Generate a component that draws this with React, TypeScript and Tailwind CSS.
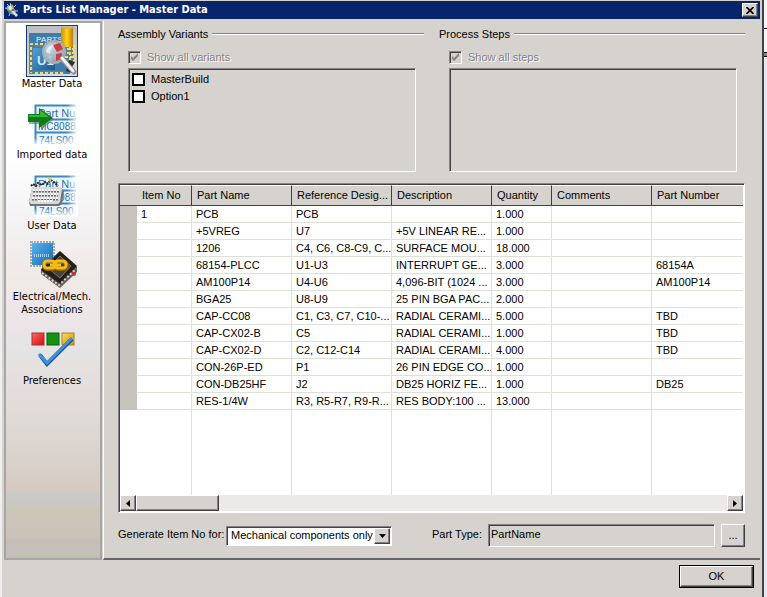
import React, { ReactNode, useState } from "react";

interface Part {
  itemNo?: string;
  name: string;
  ref: string;
  description?: string;
  quantity: string;
  comments?: string;
  partNumber?: string;
}

const parts: Part[] = [
  { itemNo: "1", name: "PCB", ref: "PCB", quantity: "1.000" },
  { name: "+5VREG", ref: "U7", description: "+5V LINEAR RE...", quantity: "1.000" },
  { name: "1206", ref: "C4, C6, C8-C9, C...", description: "SURFACE MOU...", quantity: "18.000" },
  { name: "68154-PLCC", ref: "U1-U3", description: "INTERRUPT GE...", quantity: "3.000", partNumber: "68154A" },
  { name: "AM100P14", ref: "U4-U6", description: "4,096-BIT (1024 ...", quantity: "3.000", partNumber: "AM100P14" },
  { name: "BGA25", ref: "U8-U9", description: "25 PIN BGA PAC...", quantity: "2.000" },
  { name: "CAP-CC08", ref: "C1, C3, C7, C10-...", description: "RADIAL CERAMI...", quantity: "5.000", partNumber: "TBD" },
  { name: "CAP-CX02-B", ref: "C5", description: "RADIAL CERAMI...", quantity: "1.000", partNumber: "TBD" },
  { name: "CAP-CX02-D", ref: "C2, C12-C14", description: "RADIAL CERAMI...", quantity: "4.000", partNumber: "TBD" },
  { name: "CON-26P-ED", ref: "P1", description: "26 PIN EDGE CO...", quantity: "1.000" },
  { name: "CON-DB25HF", ref: "J2", description: "DB25 HORIZ FE...", quantity: "1.000", partNumber: "DB25" },
  { name: "RES-1/4W", ref: "R3, R5-R7, R9-R...", description: "RES BODY:100 ...", quantity: "13.000" },
];

const headers = ["Item No", "Part Name", "Reference Desig...", "Description", "Quantity", "Comments", "Part Number"];

const raised =
  "border border-t-white border-l-white border-r-[#424142] border-b-[#424142] shadow-[inset_-1px_-1px_0_#848284] bg-[#d6d3ce]";
const sunken =
  "border border-t-[#848284] border-l-[#848284] border-r-white border-b-white shadow-[inset_1px_1px_0_#424142]";

const AppIcon = () => (
  <svg viewBox="0 0 16 16" className="size-4">
    <path d="M3 2l2 2M6 1l1 3M1 6l3 1M12 3l-2 2M14 9l-3 0M5 14l1-3" stroke="#b9c4c4" />
    <path d="M4 3l4 1 4 5-2 4-5-2-3-5z" fill="#8faeae" />
    <path d="M4 5l3-2 2 3-3 3z" fill="#dfe5df" />
    <path d="M7 2l2 1 1 3-2 0z" fill="#c9a23a" />
    <path d="M4 8l3 1-1 3-2-2z" fill="#3d8b50" />
    <path d="M9 8l5 5-2 2-4-5z" fill="#d8e2ea" />
    <path d="M8 7l2 0 0 2-2 0z" fill="#b44a3a" />
  </svg>
);

const MasterIcon = () => (
  <svg viewBox="0 0 52 52" className="size-13">
    <defs>
      <linearGradient id="masterBack" x1="0" y1="0" x2="0" y2="1">
        <stop offset="0" stopColor="#bcbec2" />
        <stop offset="1" stopColor="#dcdcdc" />
      </linearGradient>
      <linearGradient id="masterGold" x1="0" x2="1">
        <stop offset="0" stopColor="#d48f00" />
        <stop offset="0.5" stopColor="#ffd21c" />
        <stop offset="1" stopColor="#b97c00" />
      </linearGradient>
      <linearGradient id="masterChip" x1="0" y1="0" x2="1" y2="1">
        <stop offset="0" stopColor="#4da3de" />
        <stop offset="1" stopColor="#20578c" />
      </linearGradient>
      <radialGradient id="masterLens" cx="0.35" cy="0.3" r="0.8">
        <stop offset="0" stopColor="#e4e8ea" />
        <stop offset="1" stopColor="#8aa3b5" />
      </radialGradient>
    </defs>
    <rect x="0.5" y="0.5" width="51" height="51" fill="url(#masterBack)" stroke="#173a75" />
    <rect x="3" y="8" width="41" height="41" fill="#3d7cab" />
    <path d="M3 19h16v3H7v27H3zM34 22h14v14H34zM7 46h31v3H7z" fill="#5d8093" />
    <path d="M4 19h16M5 22v26M9 48h28M36 24h12M36 28h12M39 32h9M44 22v16M48 20v18" fill="none" stroke="#e6dc7b" strokeWidth="2" strokeDasharray="3 2" />
    <text x="10" y="17" fontSize="8" fontWeight="bold" fontFamily="Liberation Sans, sans-serif" fill="#b9d7e8">PARTS</text>
    <rect x="7" y="23" width="22" height="22" rx="1" fill="url(#masterChip)" />
    <text x="11" y="40" fontSize="13" fontWeight="bold" fontFamily="Liberation Sans, sans-serif" fill="#d5e7f2">U1</text>
    <rect x="35" y="2" width="12" height="20" fill="url(#masterGold)" />
    <ellipse cx="41" cy="3" rx="6" ry="1" fill="#e8b41e" />
    <path d="M43 35l6 2-3 5 3 7-9-3z" fill="#2b2f33" />
    <circle cx="28" cy="27" r="11" fill="url(#masterLens)" fillOpacity="0.85" stroke="#a9adb0" strokeWidth="2" />
    <path d="M27 20l7-2 3 6-6 3zM30 29l6-1-1 6-5 2z" fill="#cf3a3e" />
    <path d="M20 27c1-5 4-7 8-7-3 3-4 6-4 9z" fill="#fff" fillOpacity="0.6" />
    <path d="M36 34l12 13" stroke="#8d8f91" strokeWidth="5" strokeLinecap="round" />
    <path d="M36 33l11 13" stroke="#f2f2f2" strokeWidth="3" strokeLinecap="round" />
  </svg>
);

const SheetRows = ({ id }: { id: string }) => (
  <>
    <defs>
      <linearGradient id={id} x1="0" x2="1">
        <stop offset="0.75" stopColor="#fff" stopOpacity="0" />
        <stop offset="1" stopColor="#fff" />
      </linearGradient>
      <linearGradient id={id + "Low"} x1="0" x2="0" y1="0" y2="1">
        <stop offset="0.8" stopColor="#fff" stopOpacity="0" />
        <stop offset="1" stopColor="#fff" />
      </linearGradient>
    </defs>
    <rect x="9" y="9" width="42" height="40" fill="#eaf4fa" />
    <path d="M9.5 48V9.5H50M9 23.5h41M9 36.5h41" fill="none" stroke="#3f87bd" strokeWidth="2" />
    <g fontFamily="Liberation Sans, sans-serif" fill="#286fa6">
      <text x="12" y="21" fontSize="11">Part Nu</text>
      <text x="12" y="34" fontSize="10">MC8088</text>
      <text x="13" y="48" fontSize="10">74LS00</text>
    </g>
    <rect x="8" y="8" width="44" height="42" fill={`url(#${id})`} />
    <rect x="8" y="8" width="44" height="42" fill={`url(#${id}Low)`} />
  </>
);

const ImportIcon = () => (
  <svg viewBox="0 0 52 52" className="size-13">
    <SheetRows id="importFade" />
    <path d="M3 19h12v-5l13 9-13 11v-6H3z" fill="#5c7d68" opacity="0.6" />
    <path d="M2 18h11v-6l14 10-14 10v-6H2z" fill="#0e7d18" />
    <path d="M3 19h11v-5l9 7H3z" fill="#36b836" />
  </svg>
);

const UserIcon = () => (
  <svg viewBox="0 0 52 52" className="size-13">
    <SheetRows id="userFade" />
    <path d="M5 19l2-2 3 2 2-3 4 2 3-3 2 2 4-4 4 3 3 3" fill="none" stroke="#262626" strokeWidth="2" strokeDasharray="2 1" />
    <path d="M22 11l4 1-2 4z" fill="#d5bd31" />
    <path d="M6 21h29l3 3-2 13-3 2H4l-1-4z" fill="#707374" />
    <path d="M6 20h28l2 2-2 13-2 2H5l-2-2z" fill="#d8d9d8" />
    <path d="M7 24h26M7 28h25M6 32h26" stroke="#686b6b" strokeWidth="3" strokeDasharray="2 1" />
    <path d="M7 23h26M7 27h25M6 31h26M12 34h14" stroke="#f9f9f9" strokeWidth="2" strokeDasharray="2 1" />
  </svg>
);

const LinkIcon = () => (
  <svg viewBox="0 0 52 52" className="size-13">
    <defs>
      <linearGradient id="chipBlue" x1="0" y1="0" x2="1" y2="1">
        <stop offset="0" stopColor="#57b6f0" />
        <stop offset="1" stopColor="#1766ab" />
      </linearGradient>
    </defs>
    <rect x="5" y="4" width="23" height="24" fill="none" stroke="#a4a9ac" strokeWidth="2" strokeDasharray="2 1" />
    <rect x="6" y="5" width="21" height="22" fill="url(#chipBlue)" />
    <path d="M8 17.5h16" stroke="#9fd1ef" strokeWidth="3" strokeDasharray="1 1" />
    <path d="M33 14l18 15v5L34 50l-19-14v-5z" fill="#65605b" />
    <path d="M34 13l17 15-17 18-19-14z" fill="#22201f" />
    <path d="M34 18l11 10-11 12-12-10z" fill="#444" stroke="#8c7337" />
    <path d="M16 35l17 12 17-16" fill="none" stroke="#d5d2ca" strokeWidth="2" strokeDasharray="2 2" />
    <circle cx="48" cy="36" r="2" fill="#df2732" />
    <g fill="none" stroke="#8f6100" strokeWidth="4">
      <rect x="18" y="24" width="12" height="7" rx="3" />
      <rect x="29" y="24" width="12" height="7" rx="3" />
    </g>
    <g fill="none" stroke="#f6bd17" strokeWidth="3">
      <rect x="18" y="23" width="11" height="7" rx="3" />
      <rect x="29" y="23" width="11" height="7" rx="3" />
      <path d="M24 27h11" />
    </g>
  </svg>
);

const PreferencesIcon = () => (
  <svg viewBox="0 0 52 52" className="size-13">
    <defs>
      <linearGradient id="prefRed" x1="0" y1="0" x2="1" y2="1">
        <stop offset="0" stopColor="#f66" />
        <stop offset="1" stopColor="#d00c0c" />
      </linearGradient>
      <linearGradient id="prefGold" x1="0" y1="0" x2="1" y2="1">
        <stop offset="0" stopColor="#ffdb63" />
        <stop offset="1" stopColor="#d29100" />
      </linearGradient>
    </defs>
    <rect x="6" y="11" width="12" height="12" fill="url(#prefRed)" stroke="#a33" />
    <rect x="21" y="11" width="12" height="12" fill="#129312" stroke="#0b610b" />
    <rect x="36" y="11" width="12" height="12" fill="url(#prefGold)" stroke="#a8812a" />
    <path d="M14 33l7 9L46 17" fill="none" stroke="#1c4f86" strokeWidth="4" />
    <path d="M13 32l8 9L46 16" fill="none" stroke="#3d92db" strokeWidth="3" />
  </svg>
);

interface NavItemProps {
  icon: ReactNode;
  children: ReactNode;
}

const NavItem: React.FC<NavItemProps> = ({ icon, children }) => (
  <button className="flex w-full flex-col items-center text-center leading-[13px]">
    {icon}
    <span>{children}</span>
  </button>
);

interface GroupProps {
  title: string;
  allLabel: string;
  children?: ReactNode;
}

const Group: React.FC<GroupProps> = ({ title, allLabel, children }) => (
  <section className="min-w-0 flex-1">
    <div className="flex h-4 items-center gap-1">
      <h2>{title}</h2>
      <div className="h-[2px] flex-1 border-t border-[#848284] bg-white" />
    </div>
    <label className="mt-[7px] ml-[10px] flex h-4 items-center gap-1.5 text-[#848284] [text-shadow:1px_1px_0_#fff]">
      <span className="relative flex size-[13px]">
        <input type="checkbox" checked disabled readOnly className={`size-[13px] appearance-none ${sunken}`} />
        <svg viewBox="0 0 13 13" className="pointer-events-none absolute inset-0 size-[13px]">
          <path d="M3 5v3l2 2 5-5V2L5 7z" fill="#848284" />
        </svg>
      </span>
      {allLabel}
    </label>
    <div className={`mt-[3px] mr-2 ml-[10px] h-[104px] px-[3px] py-[2px] ${sunken}`}>{children}</div>
  </section>
);

const Variant = ({ name }: { name: string }) => (
  <label className="flex h-[17px] items-center gap-1.5">
    <input type="checkbox" className="size-[13px] appearance-none border-2 border-black bg-white checked:bg-black" />
    {name}
  </label>
);

const PartsTable = () => (
  <div className={`mt-[11px] flex h-[330px] flex-col bg-white p-px ${sunken}`}>
    <table className="h-0 w-full flex-1 table-fixed border-separate border-spacing-0">
      <colgroup>
        <col className="w-[17px]" />
        <col className="w-[55px]" />
        <col className="w-[100px]" />
        <col className="w-[100px]" />
        <col className="w-[100px]" />
        <col className="w-[60px]" />
        <col className="w-[100px]" />
        <col />
      </colgroup>
      <thead>
        <tr className="h-[21px] bg-[#d6d3ce]">
          <th className="border-t border-b border-t-white border-b-[#424142]" />
          {headers.map((h, i) => (
            <th
              key={h}
              className={`overflow-hidden border-t border-b border-t-white border-b-[#424142] p-0 pl-[5px] text-left font-normal whitespace-nowrap ${
                i < headers.length - 1 ? "border-r border-r-[#424142]" : ""
              }`}
            >
              {h}
            </th>
          ))}
        </tr>
      </thead>
      <tbody>
        {parts.map((p) => (
          <tr key={p.name} className="h-[17px]">
            <td className="bg-[#c6c3bd] p-0" />
            {[p.itemNo, p.name, p.ref, p.description, p.quantity, p.comments, p.partNumber].map((value, i) => (
              <td
                key={i}
                className={`overflow-hidden border-b border-[#dedfd6] p-0 pl-1 leading-4 whitespace-nowrap ${
                  i < 6 ? "border-r" : ""
                }`}
              >
                {value}
              </td>
            ))}
          </tr>
        ))}
        <tr>
          <td className="p-0" />
          {headers.map((h, i) => (
            <td key={h} className={`border-[#dedfd6] p-0 ${i < 6 ? "border-r" : ""}`} />
          ))}
        </tr>
      </tbody>
    </table>
    <div className="flex h-4 shrink-0 bg-[#ebeae8]">
      <button aria-label="Scroll left" className={`flex w-4 items-center justify-center ${raised}`}>
        <svg viewBox="0 0 4 7" className="h-[7px] w-1">
          <path d="M4 0v7L0 3.5z" />
        </svg>
      </button>
      <div className={`w-[83px] ${raised}`} />
      <div className="flex-1" />
      <button aria-label="Scroll right" className={`flex w-4 items-center justify-center ${raised}`}>
        <svg viewBox="0 0 4 7" className="h-[7px] w-1">
          <path d="M0 0v7l4-3.5z" />
        </svg>
      </button>
    </div>
  </div>
);

export default function App() {
  const [numbering, setNumbering] = useState("Mechanical components only");

  return (
    <div className="flex min-h-screen bg-[#d6d3ce] font-['Liberation_Sans',Arial,sans-serif] text-[11px] text-black">
      <div className="flex min-w-0 flex-1 flex-col border-r-2 border-l-2 border-r-[#42414a] border-l-[#efefef] pt-px pr-[2px] pl-[2px]">
        <header className="flex h-[18px] items-center gap-[3px] bg-[#08246b] pr-[2px] text-white">
          <AppIcon />
          <h1 className="flex-1 font-['DejaVu_Sans_Condensed','DejaVu_Sans',sans-serif] font-bold">
            Parts List Manager - Master Data
          </h1>
          <button aria-label="Close" className={`flex h-[14px] w-4 items-center justify-center ${raised}`}>
            <svg viewBox="0 0 8 7" className="h-[7px] w-2">
              <path d="M0.5 0l7 7M7.5 0l-7 7" stroke="#000" strokeWidth="1.6" />
            </svg>
          </button>
        </header>

        <div className="mt-[2px] flex">
          <nav className="flex w-[98px] shrink-0 flex-col gap-1.5 border-2 border-[#a5a6a5] bg-[linear-gradient(#fff_0%,#fff_25%,#f3f1f2_38%,#efe9e6_48%,#ece6e8_55%,#e4e3e3_62%,#e4dcda_70%,#ddd9d2_76%,#d8d0ca_83%,#d6cbc2_87%,#cccac6_88%,#cbc8c4_90%,#cac7b6_91%,#cdc4bb_93%,#cbc2b8_96%,#c8bcb8_97%,#c3c1bc_98%,#c2bfb0_100%)] pt-[2px] pr-[2px] font-['DejaVu_Sans_Condensed','DejaVu_Sans',sans-serif]">
            <NavItem icon={<MasterIcon />}>Master Data</NavItem>
            <NavItem icon={<ImportIcon />}>Imported data</NavItem>
            <NavItem icon={<UserIcon />}>User Data</NavItem>
            <NavItem icon={<LinkIcon />}>
              Electrical/Mech.
              <br />
              Associations
            </NavItem>
            <NavItem icon={<PreferencesIcon />}>Preferences</NavItem>
          </nav>

          <main className="ml-px min-w-0 flex-1 border-b-2 border-l border-b-[#63656b] border-l-white pt-[5px] pr-[15px] pb-[11px] pl-[14px]">
            <div className="flex gap-[15px]">
              <Group title="Assembly Variants" allLabel="Show all variants">
                <Variant name="MasterBuild" />
                <Variant name="Option1" />
              </Group>
              <Group title="Process Steps" allLabel="Show all steps" />
            </div>

            <PartsTable />

            <div className="mt-[11px] flex h-[23px] items-center">
              <label htmlFor="numbering" className="w-[108px] pb-[2px] whitespace-nowrap">
                Generate Item No for:
              </label>
              <div className="relative w-[166px]">
                <select
                  id="numbering"
                  value={numbering}
                  onChange={(e) => setNumbering(e.target.value)}
                  className={`block h-5 w-full appearance-none bg-white pl-1 ${sunken}`}
                >
                  <option>Mechanical components only</option>
                  <option>All components</option>
                </select>
                <span
                  className={`pointer-events-none absolute top-[2px] right-[2px] flex h-4 w-4 items-center justify-center ${raised}`}
                >
                  <svg viewBox="0 0 7 4" className="h-1 w-[7px]">
                    <path d="M0 0h7L3.5 4z" />
                  </svg>
                </span>
              </div>
              <label htmlFor="partType" className="ml-10 w-[56px] pb-[2px] whitespace-nowrap">
                Part Type:
              </label>
              <input
                id="partType"
                readOnly
                value="PartName"
                className={`h-[23px] min-w-0 flex-1 px-[2px] pb-1 ${sunken}`}
              />
              <button className={`ml-1.5 h-[23px] w-6 ${raised}`}>...</button>
            </div>
          </main>
        </div>

        <footer className="flex justify-end pt-[5px] pr-[6px]">
          <button className="flex h-[23px] w-[75px] border border-black">
            <span className={`flex h-full flex-1 items-center justify-center ${raised}`}>OK</span>
          </button>
        </footer>
      </div>
      {/* edge of the window behind the dialog */}
      <div className="w-[3px] bg-[#e7e7ef]">
        <div className="h-[28px] bg-[#f4f4f4]" />
        <div className="h-px bg-black" />
        <div className="h-[23px] bg-[#f4f4f4]" />
        <div className="h-[5px] border-y border-black bg-[#848284]" />
      </div>
    </div>
  );
}
